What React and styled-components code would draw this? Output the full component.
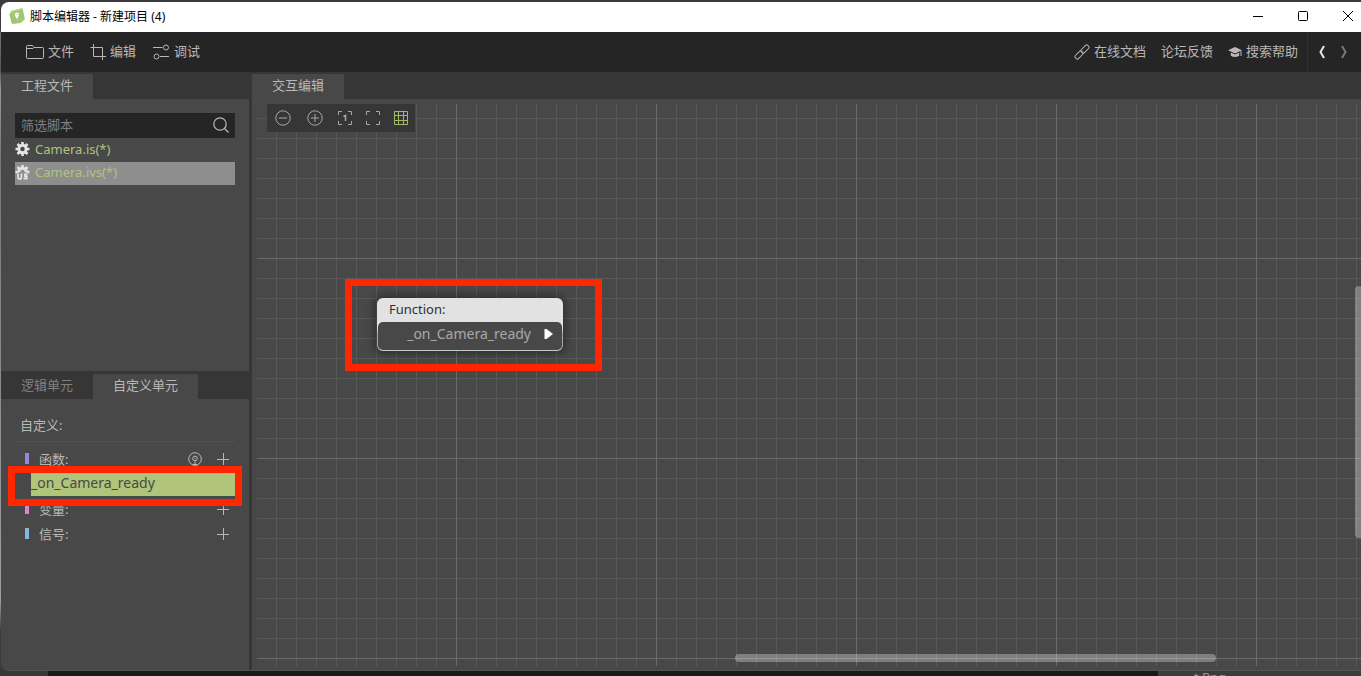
import React, { useState } from 'react';
import styled, { createGlobalStyle, ThemeProvider } from 'styled-components';

const theme = {
  font: "'Noto Sans', 'Noto Sans CJK SC', sans-serif",
  bar: '#252525',
  strip: '#363636',
  panel: '#484848',
  text: '#b8b8b8',
  muted: '#808080',
  green: '#b0c47a',
  red: '#ff2600',
  fontSize: { s: '12px', m: '13px', l: '14px' },
};

const GlobalStyle = createGlobalStyle`
  *, *::before, *::after {
    box-sizing: border-box;
  }
  body {
    margin: 0;
    background: #3a3839;
    overflow: hidden;
  }
  button, input {
    font: inherit;
    color: inherit;
    background: none;
    border: 0;
    padding: 0;
    margin: 0;
  }
  h1, h2, ul {
    font: inherit;
    margin: 0;
    padding: 0;
    list-style: none;
  }
  svg {
    display: block;
    flex: none;
  }
`;

const Desktop = styled.div`
  display: flex;
  flex-direction: column;
  height: 100vh;
  padding: 2px 0 0 1px;
  font-family: ${({ theme }) => theme.font};
  font-size: ${({ theme }) => theme.fontSize.m};
  line-height: 20px;
  color: ${({ theme }) => theme.text};
  background: linear-gradient(#3c3c3c 30px, #777 34px, #555 70px, #999 90px, #777 160px, #a0a0a0 600px, #3a3839 632px);
`;

const Window = styled.main`
  flex: 1;
  min-height: 0;
  display: flex;
  flex-direction: column;
  overflow: hidden;
  border-radius: 8px 0 0 8px;
  border-bottom: 1px solid #525252;
  background: ${({ theme }) => theme.strip};
`;

const TitleBar = styled.header`
  display: flex;
  align-items: center;
  height: 30px;
  flex: none;
  padding: 0 5px 2px 8px;
  background: #fff;
  color: #000;
`;

const Title = styled.h1`
  flex: 1;
  margin-left: 5px;
  padding-top: 2px;
  font-size: ${({ theme }) => theme.fontSize.s};
`;

const WindowButtons = styled.div`
  display: flex;
  gap: 29px;
`;

const IconButton = styled.button`
  display: flex;
  align-items: center;
  justify-content: center;
  width: ${({ $width }) => $width || 16}px;
  height: 16px;
  color: ${({ $color }) => $color || 'inherit'};
`;

const MenuBar = styled.nav`
  display: flex;
  align-items: center;
  height: 40px;
  flex: none;
  padding-left: 23px;
  background: ${({ theme }) => theme.bar};
`;

const MenuGroup = styled.div`
  display: flex;
  gap: 16px;
  margin-right: auto;
`;

const MenuButton = styled.button`
  display: flex;
  align-items: center;
  gap: 4px;
`;

const MenuLabel = styled.span`
  padding-bottom: 2px;
`;

const HelpLinks = styled.div`
  display: flex;
  gap: 15px;
  padding-right: 9px;
`;

const HelpLink = styled.a`
  display: flex;
  align-items: center;
  gap: 4px;
  color: inherit;
  text-decoration: none;
`;

const History = styled.div`
  display: flex;
  align-items: center;
  align-self: stretch;
  gap: 6px;
  padding: 0 9px 0 6px;
  border-left: 1px solid #303030;
`;

const Body = styled.div`
  flex: 1;
  min-height: 0;
  display: flex;
  gap: 3px;
`;

const Sidebar = styled.aside`
  width: 248px;
  flex: none;
  display: flex;
  flex-direction: column;
`;

const Section = styled.section`
  flex: 1 1 0;
  min-width: 0;
  min-height: 0;
  display: flex;
  flex-direction: column;
`;

const Tabs = styled.div`
  display: flex;
  flex: none;
  height: ${({ $tall }) => ($tall ? 28 : 27)}px;
  padding-top: ${({ $tall }) => ($tall ? 3 : 2)}px;
`;

const Tab = styled.button`
  padding: 0 20px 4px;
  color: ${({ theme, $active }) => ($active ? theme.text : theme.muted)};
  background: ${({ theme, $active }) => ($active ? theme.panel : 'transparent')};
`;

const Panel = styled.div`
  flex: 1;
  min-height: 0;
  padding: 14px;
  background: ${({ theme }) => theme.panel};
`;

const SearchBox = styled.label`
  display: flex;
  align-items: center;
  height: 25px;
  padding: 0 6px 2px;
  background: ${({ theme }) => theme.bar};
`;

const SearchInput = styled.input`
  flex: 1;
  min-width: 0;
  outline: none;
  &::placeholder {
    color: ${({ theme }) => theme.muted};
    opacity: 1;
  }
`;

const FileRow = styled.button`
  display: flex;
  align-items: center;
  gap: 5px;
  width: 100%;
  height: ${({ $selected }) => ($selected ? 23 : 24)}px;
  padding-bottom: ${({ $selected }) => ($selected ? 3 : 2)}px;
  text-align: left;
  color: ${({ theme }) => theme.green};
  background: ${({ $selected }) => ($selected ? '#8e8e8e' : 'transparent')};
`;

const UnitHeading = styled.h2`
  margin-bottom: 4px;
  padding: 2px 5px 6px;
  border-bottom: 1px solid #525252;
`;

const UnitRow = styled.div`
  display: flex;
  align-items: center;
  gap: 12px;
  height: 25px;
  padding: 0 4px 0 10px;
`;

const UnitName = styled.span`
  flex: 1;
  display: flex;
  align-items: center;
  gap: 10px;
  &::before {
    content: '';
    width: 4px;
    height: 11px;
    background: ${({ $color }) => $color};
  }
`;

const FunctionSlot = styled.div`
  position: relative;
  padding: 2px 0 0 16px;
`;

const FunctionItem = styled.button`
  display: block;
  width: 100%;
  height: 23px;
  padding-bottom: 3px;
  text-align: left;
  font-size: ${({ theme }) => theme.fontSize.l};
  color: #484848;
  background: ${({ theme }) => theme.green};
`;

const Highlight = styled.div`
  position: absolute;
  inset: ${({ $inset }) => $inset};
  border: 7px solid ${({ theme }) => theme.red};
  pointer-events: none;
`;

const Canvas = styled.div`
  position: relative;
  flex: 1;
  min-height: 0;
  padding: 5px 0 4px 5px;
  background: ${({ theme }) => theme.panel};
`;

const line = (dir, color) => `linear-gradient(${dir}, ${color} 1px, transparent 1px)`;

const Grid = styled.div`
  height: 100%;
  padding-left: 10px;
  background-image: ${line('to right', '#6a6a6a')}, ${line('to bottom', '#6a6a6a')},
    ${line('to right', '#585858')}, ${line('to bottom', '#585858')};
  background-size: 200px 200px, 200px 200px, 20px 20px, 20px 20px;
  background-position: 199px 0, 0 154px, 19px 0, 0 14px;
`;

const CanvasTools = styled.div`
  display: inline-flex;
  align-items: center;
  gap: 12px;
  height: 28px;
  padding: 0 6px;
  color: #a8a8a8;
  background: ${({ theme }) => theme.strip};
`;

const NodeFrame = styled.div`
  position: absolute;
  left: 125px;
  top: 199px;
`;

const Node = styled.article`
  width: 186px;
  padding: 1px;
  border-radius: 6px;
  background: linear-gradient(#e2e2e2 30px, #a8a8a8 36px, #a8a8a8 50px, #d0d0d0);
  box-shadow: 0 0 8px 3px rgba(0, 0, 0, 0.35);
`;

const NodeTitle = styled.h2`
  height: 23px;
  padding-left: 11px;
  color: #303030;
`;

const NodePort = styled.div`
  display: flex;
  align-items: center;
  justify-content: flex-end;
  gap: 13px;
  height: 28px;
  padding: 0 9px 4px 0;
  border-radius: 5px;
  font-size: ${({ theme }) => theme.fontSize.l};
  color: #a8a8a8;
  background: ${({ theme }) => theme.panel};
`;

const ScrollThumb = styled.div`
  position: absolute;
  border-radius: 4px;
  background: rgba(255, 255, 255, 0.3);
`;

const HorizontalThumb = styled(ScrollThumb)`
  right: 145px;
  bottom: 8px;
  width: 481px;
  height: 8px;
`;

const VerticalThumb = styled(ScrollThumb)`
  right: -2px;
  top: 187px;
  width: 8px;
  height: 252px;
`;

const Backdrop = styled.footer`
  height: 5px;
  flex: none;
  overflow: hidden;
  padding-left: 1193px;
  line-height: 12px;
  color: #999;
  background: linear-gradient(to right, #383838 47px, #191919 47px, #191919 1157px, #3c3c3c 1157px);
`;

const Icon = ({ w = 16, h = 16, sw = 1, children }) => (
  <svg width={w} height={h} viewBox={`0 0 ${w} ${h}`} fill="none" stroke="currentColor" strokeWidth={sw} aria-hidden="true">
    {children}
  </svg>
);

const Logo = () => (
  <Icon>
    <path d="M2.200 2.800 12.600.3q.8-.1 1.100.7l2.100 9.500q.1.700-.5 1.200l-3.700 3.400-8 .9q-.8 0-1-.7L.4 6.500q-.1-.6.3-1.200z" fill="#a4c574" stroke="none" />
    <path d="M2.200 2.800 12.600.3q.8-.1 1.100.7L3.500 3.600.6 7.300.4 6.500q-.1-.6.3-1.200z" fill="#c4dca0" stroke="none" />
    <path d="M6 6.900c-.3-2.800 3.800-3.100 3.900-.6.1 1.900-1.300 2.200-1.300 5.300-.7-1.400-2.400-2.500-2.600-4.700z" fill="#fff" stroke="none" />
    <circle cx="8" cy="6.600" r=".7" fill="#a4c574" stroke="none" />
  </Icon>
);

const FolderIcon = () => (
  <Icon w={20}>
    <path d="M2.500 13.500v-11q0-1 1-1h5l1.500 2h8.500q1 0 1 1v9q0 1-1 1h-15q-1 0-1-1zM3 4.500h6l1-1" />
  </Icon>
);

const CropIcon = () => (
  <Icon>
    <path d="M.5 3.500h12V16M3.500 0v12.500H16" />
  </Icon>
);

const DebugIcon = () => (
  <Icon w={18}>
    <path d="M1 3.500h9.500M8 12.500h9" />
    <circle cx="14" cy="3.500" r="2.500" />
    <circle cx="4.500" cy="12.500" r="2.500" />
  </Icon>
);

const LinkIcon = () => (
  <Icon>
    <rect x="-4.500" y="-2.200" width="9" height="4.400" rx="1.600" transform="translate(11 5) rotate(-45)" />
    <rect x="-4.500" y="-2.200" width="9" height="4.400" rx="1.600" transform="translate(5 11) rotate(-45)" />
  </Icon>
);

const CapIcon = () => (
  <Icon w={14}>
    <path d="M0 6.200 7 3l7 3.200-7 3.200zM2.800 8.400 7 10.400l4.200-2v3.300Q7 14.500 2.800 11.700zM12.500 7h1v5h-1z" fill="currentColor" stroke="none" />
  </Icon>
);

const SearchIcon = () => (
  <Icon sw={1.2}>
    <circle cx="7" cy="7" r="6.200" />
    <path d="m11.500 11.500 4 4" />
  </Icon>
);

const GearIcon = ({ badge }) => (
  <Icon w={15} h={16}>
    <circle cx="7.500" cy="8" r="3.700" strokeWidth="3" stroke="#e4e4e4" strokeDasharray={badge ? '11.600 40' : undefined} transform={badge ? 'rotate(180 7.500 8)' : undefined} />
    <path
      d={badge ? 'M7.500 1v3M2.500 3l2 2M12.500 3l-2 2M.5 8h3M11.500 8h3' : 'M7.500 1v3M7.500 12v3M.5 8h3M11.500 8h3M2.500 3l2 2M10.500 11l2 2M12.500 3l-2 2M4.500 11l-2 2'}
      stroke="#e4e4e4"
      strokeWidth="2.600"
    />
    {badge && <path d="M3 9.500V13q0 2 1.700 2t1.700-2V9.500M12.500 10.300H9.800v2h2v2.300H8.600" stroke="#e4e4e4" strokeWidth="1.700" />}
  </Icon>
);

const PlusIcon = () => (
  <Icon w={12} h={12}>
    <path d="M6.500 0v12M0 6.500h12" />
  </Icon>
);

const TargetIcon = () => (
  <Icon w={14} h={14}>
    <circle cx="7" cy="7" r="6.300" />
    <circle cx="7" cy="6.500" r="2.300" />
    <path d="M7 6v1M4.500 12.500h5M7 9.500v3" />
  </Icon>
);

const ZoomIcon = ({ plus }) => (
  <Icon>
    <circle cx="8" cy="8" r="7.200" />
    <path d={plus ? 'M4 8h8M8 4v8' : 'M4 8h8'} />
  </Icon>
);

const FrameIcon = ({ one }) => (
  <Icon>
    <path d="M5 1.500H1.500V5M11 1.500h3.500V5M5 14.500H1.500V11M11 14.500h3.500V11" />
    {one && <path d="m6.500 6.500 2-1V11" strokeWidth="1.500" />}
  </Icon>
);

const GridIcon = () => (
  <Icon>
    <path d="M1.500 1.500h13v13h-13zM5.500 1v14M10.500 1v14M1 5.500h14M1 10.500h14" />
  </Icon>
);

const files = [
  { name: 'Camera.is(*)' },
  { name: 'Camera.ivs(*)', visual: true },
];

const App = () => {
  const [filter, setFilter] = useState('');
  const [selected, setSelected] = useState('Camera.ivs(*)');

  return (
    <ThemeProvider theme={theme}>
      <GlobalStyle />
      <Desktop>
        <Window>
          <TitleBar>
            <Logo />
            <Title>脚本编辑器 - 新建项目 (4)</Title>
            <WindowButtons>
              <IconButton aria-label="最小化">
                <Icon><path d="M3 8.500h10" /></Icon>
              </IconButton>
              <IconButton aria-label="最大化">
                <Icon><rect x="3.500" y="3.500" width="9" height="9" rx="1" /></Icon>
              </IconButton>
              <IconButton aria-label="关闭">
                <Icon><path d="m3 3 10 10M13 3 3 13" /></Icon>
              </IconButton>
            </WindowButtons>
          </TitleBar>

          <MenuBar>
            <MenuGroup>
              <MenuButton><FolderIcon /><MenuLabel>文件</MenuLabel></MenuButton>
              <MenuButton><CropIcon /><MenuLabel>编辑</MenuLabel></MenuButton>
              <MenuButton><DebugIcon /><MenuLabel>调试</MenuLabel></MenuButton>
            </MenuGroup>
            <HelpLinks>
              <HelpLink href="#docs"><LinkIcon /><MenuLabel>在线文档</MenuLabel></HelpLink>
              <HelpLink href="#forum"><MenuLabel>论坛反馈</MenuLabel></HelpLink>
              <HelpLink href="#help"><CapIcon /><MenuLabel>搜索帮助</MenuLabel></HelpLink>
            </HelpLinks>
            <History>
              <IconButton aria-label="后退" $color="#e8e8e8">
                <Icon sw={2}><path d="M10 2 6.500 8l3.500 6" /></Icon>
              </IconButton>
              <IconButton aria-label="前进" $color="#777">
                <Icon sw={2}><path d="M6 2l3.500 6L6 14" /></Icon>
              </IconButton>
            </History>
          </MenuBar>

          <Body>
            <Sidebar>
              <Section>
                <Tabs>
                  <Tab $active>工程文件</Tab>
                </Tabs>
                <Panel>
                  <SearchBox>
                    <SearchInput
                      type="text"
                      aria-label="筛选脚本"
                      placeholder="筛选脚本"
                      value={filter}
                      onChange={(e) => setFilter(e.target.value)}
                    />
                    <SearchIcon />
                  </SearchBox>
                  <ul>
                    {files
                      .filter(({ name }) => name.includes(filter))
                      .map(({ name, visual }) => (
                        <li key={name}>
                          <FileRow $selected={name === selected} onClick={() => setSelected(name)}>
                            <GearIcon badge={visual} />
                            {name}
                          </FileRow>
                        </li>
                      ))}
                  </ul>
                </Panel>
              </Section>

              <Section>
                <Tabs $tall>
                  <Tab>逻辑单元</Tab>
                  <Tab $active>自定义单元</Tab>
                </Tabs>
                <Panel>
                  <UnitHeading>自定义:</UnitHeading>
                  <UnitRow>
                    <UnitName $color="#9488d8">函数:</UnitName>
                    <IconButton aria-label="显示函数"><TargetIcon /></IconButton>
                    <IconButton aria-label="添加函数"><PlusIcon /></IconButton>
                  </UnitRow>
                  <FunctionSlot>
                    <FunctionItem>_on_Camera_ready</FunctionItem>
                    <Highlight $inset="-5px -7px -10px -7px" />
                  </FunctionSlot>
                  <UnitRow>
                    <UnitName $color="#d884d0">变量:</UnitName>
                    <IconButton aria-label="添加变量"><PlusIcon /></IconButton>
                  </UnitRow>
                  <UnitRow>
                    <UnitName $color="#84b8d8">信号:</UnitName>
                    <IconButton aria-label="添加信号"><PlusIcon /></IconButton>
                  </UnitRow>
                </Panel>
              </Section>
            </Sidebar>

            <Section>
              <Tabs>
                <Tab $active>交互编辑</Tab>
              </Tabs>
              <Canvas>
                <Grid>
                  <CanvasTools>
                    <IconButton $width={20} aria-label="缩小"><ZoomIcon /></IconButton>
                    <IconButton $width={20} aria-label="放大"><ZoomIcon plus /></IconButton>
                    <IconButton aria-label="原始大小"><FrameIcon one /></IconButton>
                    <IconButton aria-label="适应窗口"><FrameIcon /></IconButton>
                    <IconButton aria-label="网格" $color="#a3b868"><GridIcon /></IconButton>
                  </CanvasTools>
                </Grid>
                <NodeFrame>
                  <Node>
                    <NodeTitle>Function:</NodeTitle>
                    <NodePort>
                      _on_Camera_ready
                      <Icon w={9} h={10}>
                        <path d="M.5 0h2L9 5l-6.500 5h-2z" fill="#fff" stroke="none" />
                      </Icon>
                    </NodePort>
                  </Node>
                  <Highlight $inset="-19px -39px -20px -32px" />
                </NodeFrame>
                <HorizontalThumb />
                <VerticalThumb />
              </Canvas>
            </Section>
          </Body>
        </Window>
        <Backdrop>t Ppg</Backdrop>
      </Desktop>
    </ThemeProvider>
  );
};

export default App;
